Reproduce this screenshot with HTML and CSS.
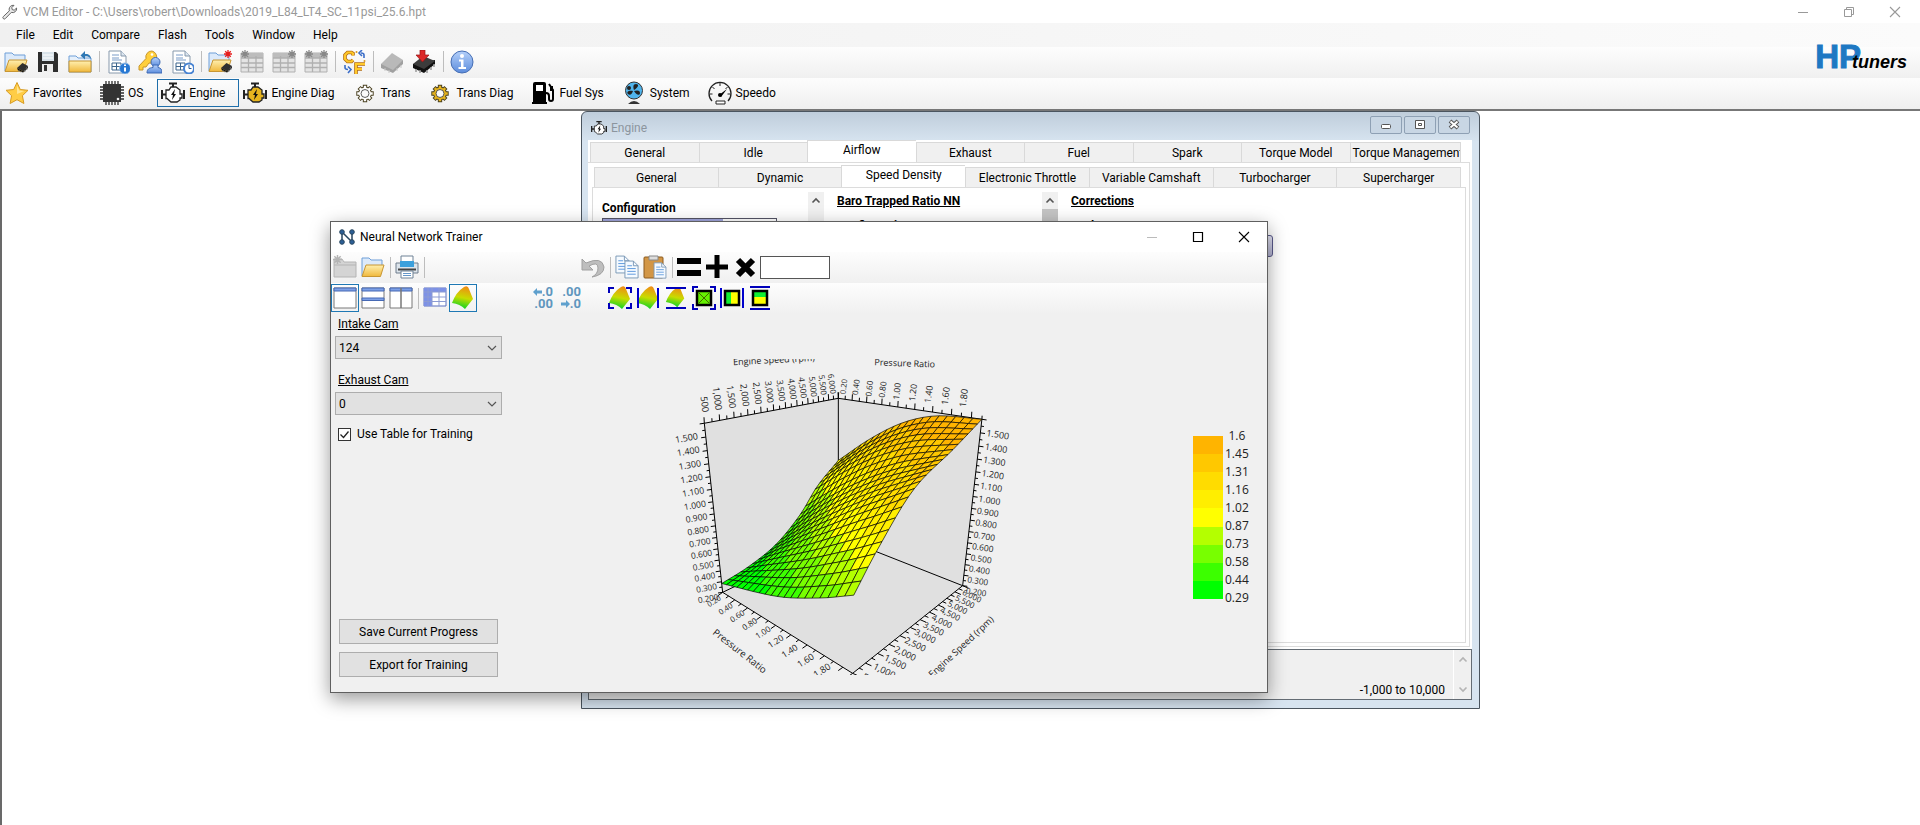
FILE: index.html
```html
<!DOCTYPE html>
<html lang="en">
<head>
    <meta charset="UTF-8">
    <meta name="viewport" content="width=device-width, initial-scale=1.0">
    <title>VCM Editor</title>
    <link rel="stylesheet" href="styles.css">
</head>
<body>

<!-- Shared icon shapes -->
<svg class="sprite" aria-hidden="true">
    <defs>
        <linearGradient id="gold" x1="0" y1="0" x2="0" y2="1">
            <stop offset="0" stop-color="#fff0b0"/><stop offset="1" stop-color="#f0b83c"/>
        </linearGradient>
        <linearGradient id="steel" x1="0" y1="0" x2="0" y2="1">
            <stop offset="0" stop-color="#b4d0fa"/><stop offset="1" stop-color="#5c8cdc"/>
        </linearGradient>
        <linearGradient id="heat" x1="0.6" y1="0" x2="0.4" y2="1">
            <stop offset="0" stop-color="#f08c14"/><stop offset="0.5" stop-color="#c8dc00"/><stop offset="1" stop-color="#00d228"/>
        </linearGradient>
        <symbol id="wrench" viewBox="0 0 16 16"><path d="M10 1.500a4 4 0 0 0-2.600 5.300L1.300 12.600a1.400 1.400 0 0 0 2 2l6-6.200A4 4 0 0 0 14.600 4l-2.400 2.200-2-.6-.4-2L12 1.400a4 4 0 0 0-2 .1z" fill="#e8e8e8" stroke="#666"/></symbol>
        <symbol id="folder" viewBox="0 0 24 24"><path d="M1 21V3h7l2 2h11v8" fill="#dceafb" stroke="#6f9fd8"/><path d="M1 21.500L5 10h18l-3.500 11.500z" fill="url(#gold)" stroke="#c89632"/></symbol>
        <symbol id="minichip" viewBox="0 0 24 24"><path d="M1 14L12 4l11 6-9 11z" fill="#303030"/><path d="M1 14l2 5 10 4 1-2zM14 21l9-11v4l-9 9z" fill="#111"/><path d="M5 18v4M9 20v3M17 18v4M21 13v5" stroke="#999" stroke-width="1.500"/></symbol>
        <symbol id="open-chip" viewBox="0 0 24 24"><use href="#folder"/><use href="#minichip" x="12" y="11" width="13" height="12"/></symbol>
        <symbol id="save" viewBox="0 0 24 24"><path d="M2 2h18l2 2v18H2z" fill="#2f2f2f"/><path d="M6 2h12v9H6z" fill="#d9e3ea"/><path d="M6 14h11v8H6z" fill="#eee"/><path d="M8 15h3v6H8z" fill="#333"/><path d="M7 5h10M7 8h10" stroke="#fff"/></symbol>
        <symbol id="folder-back" viewBox="0 0 24 24"><path d="M1 22V6h7l2 2h13v14z" fill="#e6f0fb" stroke="#6f9fd8"/><path d="M1 11h22v11H1z" fill="url(#gold)" stroke="#c89632"/><path d="M23 9c0-4-3-5.500-6-5V1l-4.500 4.500 4.500 4V6.500c3-.5 4 .5 6 2.500z" fill="#2f78b4"/></symbol>
        <symbol id="sheet" viewBox="0 0 24 24"><path d="M3 1h12l5 5v17H3z" fill="#fff" stroke="#8799ac"/><path d="M15 1v5h5" fill="#dce6f0" stroke="#8799ac"/><path d="M6 5h7M6 8h7M6 10h10" stroke="#7a9cc8"/><path d="M6 13h9v7H6zM6 16.500h9M10.500 13v7" fill="#fff" stroke="#3c648c"/></symbol>
        <symbol id="sheet-info" viewBox="0 0 24 24"><use href="#sheet"/><circle cx="19" cy="18.500" r="5.500" fill="#2878d2" stroke="#94bce8"/><path d="M19 17.500v4M19 14.500v1.500" stroke="#fff" stroke-width="2"/></symbol>
        <symbol id="sheet-clock" viewBox="0 0 24 24"><use href="#sheet"/><circle cx="19" cy="18.500" r="5" fill="#fff" stroke="#4682d2" stroke-width="2"/><path d="M19 15v3.500h2.500" fill="none" stroke="#285a96"/></symbol>
        <symbol id="key-user" viewBox="0 0 24 24"><path d="M14 1a6 6 0 0 0-6 7.500L1 16v4h4v-3h3l3-4A6 6 0 1 0 14 1z" fill="#ffcf3c" stroke="#c8962c"/><circle cx="14" cy="4.500" r="1.300" fill="#fff"/><circle cx="17.500" cy="12" r="4.500" fill="url(#steel)" stroke="#3c69b4"/><path d="M9 23c0-4 2-5 6-5.500V15h5v2.500c3 .5 4 2 4 5.500z" fill="url(#steel)" stroke="#3c69b4"/></symbol>
        <symbol id="spark" viewBox="0 0 8 8"><path d="M4 0v8M0 4h8M1.200 1.200l5.600 5.600M6.800 1.200L1.200 6.800" stroke="currentColor" stroke-width="1.300"/></symbol>
        <symbol id="folder-new" viewBox="0 0 24 24"><use href="#open-chip"/><g color="#e61e1e"><use href="#spark" x="16" y="0" width="8" height="8"/></g></symbol>
        <symbol id="gray-table" viewBox="0 0 24 24"><path d="M1 3h22v19H1z" fill="#e4e4e4" stroke="#b0b0b0"/><path d="M1 3h22v5H1z" fill="#bdbdbd"/><path d="M1 8h22M1 13h22M1 17.500h22M8.500 6v16M16 6v16" stroke="#b0b0b0" stroke-width="1.300"/></symbol>
        <symbol id="table-left" viewBox="0 0 24 24"><use href="#gray-table"/><g color="#888"><use href="#spark" x="1" y="0" width="8" height="8"/></g></symbol>
        <symbol id="table-right" viewBox="0 0 24 24"><use href="#gray-table"/><g color="#888"><use href="#spark" x="16" y="0" width="8" height="8"/></g></symbol>
        <symbol id="table-both" viewBox="0 0 24 24"><use href="#table-left"/><g color="#888"><use href="#spark" x="16" y="0" width="8" height="8"/></g></symbol>
        <symbol id="units" viewBox="0 0 24 24"><path d="M11 5.500V3.500L9.500 2.500h-4L3 5v4l2.500 2.500h4L11 10" fill="none" stroke="#b46e14" stroke-width="3.600"/><path d="M11 5.500V3.500L9.500 2.500h-4L3 5v4l2.500 2.500h4L11 10" fill="none" stroke="#ffc828" stroke-width="2"/><path d="M14 24V14h9M14 19h6" fill="none" stroke="#b46e14" stroke-width="3.600"/><path d="M14 24V14h9M14 19h6" fill="none" stroke="#ffc828" stroke-width="2"/><circle cx="14.500" cy="2" r="1" fill="#d79b23"/><circle cx="22.500" cy="11" r="1" fill="#d79b23"/><path d="M22 8V5q0-2-3-2M20 0l-3 3 3 3M3 15v2.500q0 2 3 2M6 16.500l3 3-3 3.500" fill="none" stroke="#3c6ec8" stroke-width="1.600"/></symbol>
        <symbol id="gray-chip" viewBox="0 0 24 24"><path d="M1 14v4l12 5 10-9v-4z" fill="#a0a0a0"/><path d="M1 14L12 3l11 7-10 10z" fill="#b9b9b9"/><path d="M5 18v3M9 20v3M17 18v3M21 15v3" stroke="#c8c8c8"/></symbol>
        <symbol id="red-chip" viewBox="0 0 24 24"><path d="M1 14v4l11 5 11-9v-4z" fill="#111"/><path d="M1 14L11 6l12 5-11 8z" fill="#3c3c3c"/><path d="M4 19v3M8 20v3M15 20v3M19 17v3M22 14v3" stroke="#999" stroke-width="1.500"/><path d="M8 0h5v5h4l-6.500 7L4 5h4z" fill="#dc2828" stroke="#961414" stroke-width=".7"/></symbol>
        <symbol id="info" viewBox="0 0 24 24"><circle cx="12" cy="12" r="11" fill="url(#steel)" stroke="#466eb4"/><circle cx="12" cy="6" r="2" fill="#fff"/><path d="M9 9.500h4.500V17H16v2H8.500v-2H11v-5.500H9z" fill="#fff"/></symbol>
        <symbol id="star" viewBox="0 0 24 24"><path d="M12 1.500l3.300 7 7.700.8-5.600 5.400 1.500 7.800L12 18.700l-6.900 3.800 1.500-7.800L1 9.300l7.700-.8z" fill="#ffcd46" stroke="#d79b23"/><path d="M12 4.500l2.300 5 5 .6L12 13z" fill="#ffe696"/></symbol>
        <symbol id="cpu" viewBox="0 0 24 24"><path d="M6 0v24M9 0v24M12 0v24M15 0v24M18 0v24M0 6h24M0 9h24M0 12h24M0 15h24M0 18h24" stroke="#2d2d2d" stroke-width="1.300"/><path d="M3 3h18v18H3z" fill="#333"/><circle cx="18" cy="18" r="1.300" fill="#eee"/></symbol>
        <symbol id="engine" viewBox="0 0 24 24"><path d="M8 2.500h8M12 2v4M1 9v9M1 13.500h4M23 9v9" stroke="#222" stroke-width="2" fill="none"/><path d="M5 9h3l2-3h5l4 3v4h2v4h-2v2l-3 2H10l-4-3.500H5z" fill="currentColor" stroke="#222" stroke-width="1.300"/><path d="M14 8l-4 6h2l-1 5 4-6h-2z" fill="#111"/></symbol>
        <symbol id="gear" viewBox="0 0 24 24"><g stroke="#4a4020" stroke-width="5.500"><path d="M12 1v22M1 12h22M4.500 4.500l15 15M19.500 4.500l-15 15"/></g><circle cx="12" cy="12" r="8.700" fill="#4a4020"/><g stroke="currentColor" stroke-width="3"><path d="M12 2.200v19.600M2.200 12h19.600M5.300 5.300l13.400 13.400M18.700 5.300L5.300 18.700"/></g><circle cx="12" cy="12" r="7.500" fill="currentColor"/><circle cx="12" cy="12" r="5" fill="#fbfbfb" stroke="#333"/></symbol>
        <symbol id="pump" viewBox="0 0 24 24"><path d="M2 21V3q0-2 2-2h9q2 0 2 2v18h1v2H1v-2z"/><path d="M5 4h7v6H5z" fill="#fff"/><path d="M15 12q3 0 3 3v3q0 2 2 2t2-2V9l-4-6" fill="none" stroke="#000" stroke-width="2"/><path d="M19 5h3v5h-3z"/></symbol>
        <symbol id="fan" viewBox="0 0 24 24"><circle cx="12" cy="9.500" r="8.500" fill="#50b4ec" stroke="#333"/><path d="M12 9c-1-3-1-6 2-6s3 3-2 6zM12 10c3-1 6-1 6 2s-4 2-6-2zM11 10c-1 3-3 5-5 3s1-4 5-3z" fill="#222"/><circle cx="7" cy="7" r="2" fill="#222"/><path d="M6 23q6-6 12 0z" fill="#333"/></symbol>
        <symbol id="speedo" viewBox="0 0 24 24"><path d="M4 20A11 11 0 1 1 20 20" fill="none" stroke="#222" stroke-width="1.300"/><path d="M12 2v3M4.500 6l2 2M19.500 6l-2 2M1.500 13h3M22.500 13h-3" stroke="#222"/><path d="M11 14l8-6-6 8z"/><circle cx="12" cy="14" r="2"/><path d="M8 20h9v3H8z" fill="#fff" stroke="#222"/></symbol>
        <symbol id="network" viewBox="0 0 16 16"><path d="M3 13V3l10 10V3" fill="none" stroke="#28465f" stroke-width="1.500"/><g fill="#2d5f96" stroke="#28465f"><circle cx="3" cy="3" r="2.300"/><circle cx="13" cy="3" r="2.300"/><circle cx="3" cy="13" r="2.300"/><circle cx="13" cy="13" r="2.300"/></g></symbol>
        <symbol id="folder-off" viewBox="0 0 24 24"><path d="M1 22V4h8l2 3h12v15z" fill="#d4d4d4" stroke="#b4b4b4"/><path d="M1 10h22" stroke="#b4b4b4"/><g color="#b4b4b4"><use href="#spark" x="0" y="0" width="9" height="9"/></g></symbol>
        <symbol id="printer" viewBox="0 0 24 24"><path d="M6 1h12v8H6z" fill="#fff" stroke="#6e8296"/><path d="M1 8h22v10H1z" fill="#dce4eb" stroke="#6e7d8c"/><path d="M5 6h14v6H5z" fill="#3ca0dc"/><path d="M3 14.500h18" stroke="#444" stroke-width="2"/><path d="M6 16h12v7H6z" fill="#fff" stroke="#6e8296"/><path d="M8 18.500h8M8 20.500h8" stroke="#6496c8"/></symbol>
        <symbol id="undo" viewBox="0 0 24 24"><path d="M1 4v11h11l-4-4q9-5 9 2 0 6-6 9 12-2 12-10Q21 1 5 8z" fill="#bebebe" stroke="#a0a0a0"/></symbol>
        <symbol id="page" viewBox="0 0 16 20"><path d="M1 1h9l5 5v13H1z" fill="#f5faff" stroke="#7896b4"/><path d="M10 1v5h5" fill="none" stroke="#7896b4"/><path d="M3.500 6h5M3.500 9h9M3.500 12h9M3.500 15h9" stroke="#5a96dc"/></symbol>
        <symbol id="copy" viewBox="0 0 24 24"><use href="#page" x="0" y="0" width="15" height="19"/><use href="#page" x="9" y="5" width="15" height="19"/></symbol>
        <symbol id="paste" viewBox="0 0 24 24"><rect x="1" y="2" width="19" height="21" rx="1" fill="#d29646" stroke="#8c5a1e"/><path d="M6 1h9v4H6z" fill="#ddd" stroke="#888"/><use href="#page" x="10" y="7" width="14" height="17"/></symbol>
        <symbol id="equals" viewBox="0 0 24 24"><path d="M0 3h24v6H0zM0 15h24v6H0z"/></symbol>
        <symbol id="plus" viewBox="0 0 24 24"><path d="M9.500 0h5v9.500H23v5h-8.500V23h-5v-8.500H1v-5h8.500z"/></symbol>
        <symbol id="times" viewBox="0 0 24 24"><path d="M5 5l15 15M20 5L5 20" stroke="#000" stroke-width="6"/></symbol>
        <symbol id="pane" viewBox="0 0 24 24"><path d="M1 2h22v20H1z" fill="#fff" stroke="#787878"/><path d="M1 2h22v3H1z" fill="#7da0e6" stroke="#4669b4"/></symbol>
        <symbol id="pane-rows" viewBox="0 0 24 24"><use href="#pane"/><path d="M1 12h22v2.500H1z" fill="#7da0e6" stroke="#4669b4"/></symbol>
        <symbol id="pane-cols" viewBox="0 0 24 24"><use href="#pane"/><path d="M12 2v20" stroke="#777" stroke-width="1.500"/></symbol>
        <symbol id="grid" viewBox="0 0 24 24"><path d="M1 2h22v18H1z" fill="#fff" stroke="#5a6ebe"/><path d="M1 2h22v4H1zM1 2h8v18H1z" fill="#7d91e6"/><path d="M1 6h22M1 11h22M1 15.500h22M5 2v18M9 2v18M16 2v18" stroke="#8c9bd2"/></symbol>
        <symbol id="surface" viewBox="0 0 24 24"><path d="M1 17Q5 6 13 1q4-2 5 2l4 10-8 10q-5-5-13-6z" fill="url(#heat)"/></symbol>
        <symbol id="view-all" viewBox="0 0 24 24"><use href="#surface"/><path d="M6 2H1v5M18 2h5v5M6 22H1v-5M18 22h5v-5" fill="none" stroke="#00b" stroke-width="2"/></symbol>
        <symbol id="view-x" viewBox="0 0 24 24"><use href="#surface"/><path d="M2 2v20M22 2v20" stroke="#00c" stroke-width="2"/></symbol>
        <symbol id="view-y" viewBox="0 0 24 24"><use href="#surface" x="1" y="1" width="21" height="21"/><path d="M2 2h20M2 22h20" stroke="#00b" stroke-width="2"/></symbol>
        <symbol id="fit-all" viewBox="0 0 24 24"><path d="M5 5h14v14H5z" fill="#64f000" stroke="#000" stroke-width="2.500"/><path d="M7 7l10 10M17 7L7 17" stroke="#460"/><path d="M6 1H1v5M18 1h5v5M6 23H1v-5M18 23h5v-5" fill="none" stroke="#00b" stroke-width="2"/></symbol>
        <symbol id="fit-x" viewBox="0 0 24 24"><path d="M5 5h14v14H5z" fill="#ff0"/><path d="M5 5h6v14H5z" fill="#1e3"/><path d="M5 5h14v14H5z" fill="none" stroke="#000" stroke-width="2.500"/><path d="M1 2v20M23 2v20" stroke="#00c" stroke-width="2"/></symbol>
        <symbol id="fit-y" viewBox="0 0 24 24"><path d="M5 5h14v14H5z" fill="#ff0"/><path d="M5 5h14v6H5z" fill="#1e3"/><path d="M5 5h14v14H5z" fill="none" stroke="#000" stroke-width="2.500"/><path d="M2 1h20M2 23h20" stroke="#00b" stroke-width="2"/></symbol>
        <symbol id="win-min" viewBox="0 0 12 12"><path d="M1 6.500h10" stroke="currentColor"/></symbol>
        <symbol id="win-max" viewBox="0 0 12 12"><path d="M1.500 1.500h9v9h-9z" fill="none" stroke="currentColor" stroke-width="1.200"/></symbol>
        <symbol id="win-restore" viewBox="0 0 12 12"><path d="M1.500 3.500h7v7h-7zM3.500 3.500v-2h7v7h-2" fill="none" stroke="currentColor"/></symbol>
        <symbol id="win-close" viewBox="0 0 12 12"><path d="M1 1l10 10M11 1L1 11" stroke="currentColor" stroke-width="1.100"/></symbol>
        <symbol id="chev-up" viewBox="0 0 10 10"><path d="M1.500 6.500L5 3l3.500 3.500" fill="none" stroke="currentColor" stroke-width="1.600"/></symbol>
        <symbol id="chev-down" viewBox="0 0 10 10"><path d="M1.500 3.500L5 7l3.500-3.500" fill="none" stroke="currentColor" stroke-width="1.600"/></symbol>
    </defs>
</svg>

<div class="app">
    <header class="titlebar">
        <svg class="icon-small"><use href="#wrench"/></svg>
        <h1>VCM Editor - C:\Users\robert\Downloads\2019_L84_LT4_SC_11psi_25.6.hpt</h1>
        <div class="window-buttons">
            <button aria-label="Minimize"><svg><use href="#win-min"/></svg></button>
            <button aria-label="Restore"><svg><use href="#win-restore"/></svg></button>
            <button aria-label="Close"><svg><use href="#win-close"/></svg></button>
        </div>
    </header>

    <div class="bars">
        <nav class="menubar">
            <button>File</button>
            <button>Edit</button>
            <button>Compare</button>
            <button>Flash</button>
            <button>Tools</button>
            <button>Window</button>
            <button>Help</button>
        </nav>
        <div class="toolbar main-tools">
            <button aria-label="Open"><svg><use href="#open-chip"/></svg></button>
            <button aria-label="Save"><svg><use href="#save"/></svg></button>
            <button aria-label="Close file"><svg><use href="#folder-back"/></svg></button>
            <span class="sep"></span>
            <button aria-label="File info"><svg><use href="#sheet-info"/></svg></button>
            <button aria-label="License"><svg><use href="#key-user"/></svg></button>
            <button aria-label="History"><svg><use href="#sheet-clock"/></svg></button>
            <span class="sep"></span>
            <button aria-label="Open compare"><svg><use href="#folder-new"/></svg></button>
            <button aria-label="Table left"><svg><use href="#table-left"/></svg></button>
            <button aria-label="Table right"><svg><use href="#table-right"/></svg></button>
            <button aria-label="Table both"><svg><use href="#table-both"/></svg></button>
            <span class="sep"></span>
            <button aria-label="Units"><svg><use href="#units"/></svg></button>
            <span class="sep"></span>
            <button aria-label="Read vehicle"><svg><use href="#gray-chip"/></svg></button>
            <button aria-label="Write vehicle"><svg><use href="#red-chip"/></svg></button>
            <span class="sep"></span>
            <button aria-label="About"><svg><use href="#info"/></svg></button>
        </div>
        <div class="logo"><span class="logo-hp">HP</span><span class="logo-tuners">tuners</span></div>
    </div>

    <nav class="sections">
        <button><svg><use href="#star"/></svg>Favorites</button>
        <button><svg><use href="#cpu"/></svg>OS</button>
        <button class="selected"><svg><use href="#engine"/></svg>Engine</button>
        <button><svg class="amber"><use href="#engine"/></svg>Engine Diag</button>
        <button><svg class="cog"><use href="#gear"/></svg>Trans</button>
        <button><svg class="cog amber"><use href="#gear"/></svg>Trans Diag</button>
        <button><svg><use href="#pump"/></svg>Fuel Sys</button>
        <button><svg><use href="#fan"/></svg>System</button>
        <button><svg><use href="#speedo"/></svg>Speedo</button>
    </nav>

    <main class="workspace">
        <section class="engine-window">
            <div class="engine-title">
                <svg class="icon-small"><use href="#engine"/></svg>
                <h2>Engine</h2>
                <div class="mdi-buttons">
                    <button aria-label="Minimize"><svg viewBox="0 0 12 12"><rect x="1.500" y="5.500" width="9" height="4" rx="1" fill="#fff" stroke="#555"/></svg></button>
                    <button aria-label="Maximize"><svg viewBox="0 0 12 12"><path d="M1.500 1.500h9v8h-9zM4.500 4.500h3v2h-3z" fill="#fff" stroke="#555"/></svg></button>
                    <button aria-label="Close"><svg viewBox="0 0 12 12"><path d="M2 2l8 7M10 2L2 9" stroke="#555" stroke-width="4"/><path d="M2.500 2.500l7 6M9.500 2.500l-7 6" stroke="#fff" stroke-width="2"/></svg></button>
                </div>
            </div>
            <div class="engine-body">
                <div class="tabs">
                    <button>General</button>
                    <button>Idle</button>
                    <button class="active">Airflow</button>
                    <button>Exhaust</button>
                    <button>Fuel</button>
                    <button>Spark</button>
                    <button>Torque Model</button>
                    <button class="cut">Torque Management</button>
                </div>
                <div class="outer-page">
                    <div class="tabs sub">
                        <button>General</button>
                        <button>Dynamic</button>
                        <button class="active">Speed Density</button>
                        <button>Electronic Throttle</button>
                        <button>Variable Camshaft</button>
                        <button>Turbocharger</button>
                        <button>Supercharger</button>
                    </div>
                    <div class="inner-page">
                        <div class="param-column first">
                            <h3>Configuration</h3>
                            <div class="meter"><span></span></div>
                        </div>
                        <div class="scroll"><svg><use href="#chev-up"/></svg></div>
                        <div class="param-column second">
                            <h3 class="underlined">Baro Trapped Ratio NN</h3>
                            <h4>Configuration</h4>
                        </div>
                        <div class="scroll"><svg><use href="#chev-up"/></svg><i class="thumb"></i></div>
                        <div class="param-column third">
                            <h3 class="underlined">Corrections</h3>
                            <h4>Scalar</h4>
                            <button class="table-button" aria-label="Open table"></button>
                        </div>
                    </div>
                </div>
                <div class="status">
                    <span>-1,000 to 10,000</span>
                    <div class="status-scroll"><svg><use href="#chev-up"/></svg><svg><use href="#chev-down"/></svg></div>
                </div>
            </div>
        </section>
    </main>

    <section class="trainer">
        <div class="trainer-title">
            <svg class="icon-small"><use href="#network"/></svg>
            <h2>Neural Network Trainer</h2>
            <div class="window-buttons">
                <button class="off" aria-label="Minimize"><svg><use href="#win-min"/></svg></button>
                <button aria-label="Maximize"><svg><use href="#win-max"/></svg></button>
                <button aria-label="Close"><svg><use href="#win-close"/></svg></button>
            </div>
        </div>
        <div class="toolbar small-tools">
            <div class="tool-group file-group">
                <button aria-label="New"><svg><use href="#folder-off"/></svg></button>
                <button aria-label="Open"><svg><use href="#folder"/></svg></button>
                <span class="sep"></span>
                <button aria-label="Print"><svg><use href="#printer"/></svg></button>
                <span class="sep"></span>
            </div>
            <button aria-label="Undo"><svg><use href="#undo"/></svg></button>
            <span class="sep"></span>
            <button aria-label="Copy"><svg><use href="#copy"/></svg></button>
            <button aria-label="Paste"><svg><use href="#paste"/></svg></button>
            <span class="sep"></span>
            <button aria-label="Set value"><svg><use href="#equals"/></svg></button>
            <button aria-label="Add"><svg><use href="#plus"/></svg></button>
            <button aria-label="Multiply"><svg><use href="#times"/></svg></button>
            <input type="text" class="value-input" aria-label="Value">
        </div>
        <div class="toolbar small-tools">
            <div class="tool-group view-group">
                <button class="selected" aria-label="Single pane"><svg><use href="#pane"/></svg></button>
                <button aria-label="Split rows"><svg><use href="#pane-rows"/></svg></button>
                <button aria-label="Split columns"><svg><use href="#pane-cols"/></svg></button>
                <span class="sep"></span>
                <button aria-label="Table view"><svg><use href="#grid"/></svg></button>
                <button class="selected" aria-label="Surface view"><svg><use href="#surface"/></svg></button>
            </div>
            <div class="tool-group decimal-group">
                <button class="decimals"><span><svg class="arrow" viewBox="0 0 9 8"><path d="M0 4l4-4v2.500h5v3H4V8z"/></svg>.0</span><span>.00</span></button>
                <button class="decimals"><span>.00</span><span><svg class="arrow" viewBox="0 0 9 8"><path d="M9 4L5 0v2.500H0v3h5V8z"/></svg>.0</span></button>
            </div>
            <button aria-label="Surface all"><svg><use href="#view-all"/></svg></button>
            <button aria-label="Surface columns"><svg><use href="#view-x"/></svg></button>
            <button aria-label="Surface rows"><svg><use href="#view-y"/></svg></button>
            <button aria-label="Interpolate all"><svg><use href="#fit-all"/></svg></button>
            <button aria-label="Interpolate columns"><svg><use href="#fit-x"/></svg></button>
            <button aria-label="Interpolate rows"><svg><use href="#fit-y"/></svg></button>
        </div>
        <div class="trainer-body">
            <form class="side">
                <label for="intake">Intake Cam</label>
                <select id="intake"><option>124</option></select>
                <label for="exhaust">Exhaust Cam</label>
                <select id="exhaust"><option>0</option></select>
                <div class="check-row">
                    <input type="checkbox" id="use-table" checked>
                    <label for="use-table">Use Table for Training</label>
                </div>
                <div class="actions">
                    <button type="button">Save Current Progress</button>
                    <button type="button">Export for Training</button>
                </div>
            </form>
            <div class="plot"><svg id="chart" viewBox="0 27 1020 948"></svg></div>
            <div class="legend">
                <div class="legend-bar" id="legend-bar"></div>
                <div class="legend-labels">
                    <span>1.6</span><span>1.45</span><span>1.31</span><span>1.16</span><span>1.02</span>
                    <span>0.87</span><span>0.73</span><span>0.58</span><span>0.44</span><span>0.29</span>
                </div>
            </div>
        </div>
    </section>
</div>

<script src="chart.js"></script>
</body>
</html>
```

FILE: styles.css
```css
* {
    box-sizing: border-box;
}
body {
    margin: 0;
    background: #fff;
    color: #000;
    font-family: Roboto, "Open Sans", sans-serif;
    font-size: 12px;
}
h1, h2, h3, h4 {
    margin: 0;
    font-size: 12px;
    font-weight: normal;
}
button {
    padding: 0;
    border: 0;
    background: none;
    color: inherit;
    font: inherit;
    white-space: nowrap;
}
svg {
    display: block;
    flex: none;
}
.sprite {
    position: absolute;
    width: 0;
    height: 0;
}
.app {
    position: relative;
    display: flex;
    flex-direction: column;
    min-height: 100vh;
}
.icon-small {
    width: 16px;
    height: 16px;
    color: #fff;
}

/* Main window title */
.titlebar {
    display: flex;
    align-items: center;
    height: 23px;
    padding-left: 2px;
    gap: 5px;
    color: #999;
}
.window-buttons {
    display: flex;
    margin-left: auto;
}
.window-buttons button {
    display: flex;
    align-items: center;
    justify-content: center;
    width: 46px;
    height: 22px;
}
.window-buttons svg {
    width: 12px;
    height: 12px;
}
.titlebar .window-buttons {
    padding-right: 2px;
}

/* Menu and tool bars */
.bars {
    position: relative;
}
.menubar {
    display: flex;
    align-items: center;
    height: 24px;
    padding-left: 7px;
    background: linear-gradient(to right, #f0f0f0, #fbfbfb);
}
.menubar button {
    padding: 0 9px;
}
.toolbar {
    display: flex;
    align-items: center;
    background: linear-gradient(#fdfdfd, #f0f0f0);
}
.toolbar button {
    display: flex;
    align-items: center;
    justify-content: center;
}
.toolbar svg {
    width: 24px;
    height: 24px;
}
.main-tools {
    height: 31px;
    padding-bottom: 2px;
}
.main-tools button {
    width: 32px;
    height: 28px;
}
.sep {
    width: 3px;
    height: 21px;
    margin-left: 3px;
    border-left: 1px solid #bdbdbd;
}
.logo {
    position: absolute;
    right: 13px;
    bottom: 0;
    display: flex;
    align-items: baseline;
    font-family: "Liberation Sans", Arial, sans-serif;
    font-weight: bold;
    line-height: 32px;
}
.logo-hp {
    color: #1e78c3;
    font-size: 33px;
    -webkit-text-stroke: 1px #1e78c3;
}
.logo-tuners {
    margin-left: -9px;
    font-size: 18px;
    font-style: italic;
}
.sections {
    display: flex;
    height: 33px;
    padding-left: 1px;
    background: linear-gradient(#fdfdfd, #efefef);
    border-bottom: 2px solid #777;
}
.sections button {
    display: flex;
    align-items: center;
    gap: 4px;
    height: 28px;
    margin-top: 1px;
    padding: 0 13px 0 3px;
    border: 1px solid transparent;
}
.sections button.selected {
    border-color: #1e6eaa;
}
.sections svg {
    width: 24px;
    height: 24px;
    color: #fff;
}
.sections .cog {
    height: 19px;
}
.sections .amber {
    color: #e6b41e;
}

/* Editor canvas */
.workspace {
    position: relative;
    flex: 1;
    border-left: 2px solid #696969;
    background: #fff;
}
.engine-window {
    position: absolute;
    left: 579px;
    top: 0;
    width: 899px;
    height: 598px;
    display: flex;
    flex-direction: column;
    padding: 0 7px 8px 6px;
    border: 1px solid #4b555f;
    border-radius: 6px 6px 0 0;
    background: linear-gradient(#bfcddb, #d7e4f0 30px);
}
.engine-title {
    display: flex;
    align-items: center;
    gap: 4px;
    height: 28px;
    padding: 4px 2px 0 3px;
    color: #8c959e;
}
.mdi-buttons {
    display: flex;
    gap: 2px;
    margin: -6px 0 0 auto;
}
.mdi-buttons button {
    display: flex;
    align-items: center;
    justify-content: center;
    width: 32px;
    height: 18px;
    border: 1px solid #8ea0b4;
    border-radius: 2px;
    background: #c8d6e4;
}
.mdi-buttons svg {
    width: 12px;
    height: 12px;
}
.engine-body {
    flex: 1;
    display: flex;
    flex-direction: column;
    background: #fff;
}
.tabs {
    display: flex;
    align-items: flex-end;
    height: 22px;
    padding: 0 11px 0 2px;
}
.tabs button {
    flex: 1 1 0;
    height: 20px;
    min-width: 0;
    overflow: hidden;
    border: 1px solid #d9d9d9;
    border-width: 1px 0 0 1px;
    background: #f0f0f0;
}
.tabs button:last-child {
    border-right-width: 1px;
}
.tabs button.active {
    height: 22px;
    padding-bottom: 3px;
    background: #fff;
}
.tabs button.cut {
    text-align: left;
    padding-left: 2px;
}
.outer-page {
    flex: 1;
    display: flex;
    flex-direction: column;
    margin-right: 2px;
    padding: 2px 3px 3px 4px;
    border: 1px solid #dcdcdc;
    border-left: 0;
}
.tabs.sub {
    padding: 0 5px 0 2px;
}
.inner-page {
    flex: 1;
    display: flex;
    padding: 4px 0 0 9px;
    border: 1px solid #dcdcdc;
}
.param-column h3 {
    font-weight: bold;
    line-height: 18px;
}
.param-column h4 {
    font-weight: bold;
    padding-top: 9px;
}
.first {
    width: 206px;
}
.first h3 {
    padding-top: 7px;
}
.second {
    width: 218px;
    padding-left: 13px;
}
.third {
    padding-left: 13px;
}
.underlined {
    text-decoration: underline;
}
.meter {
    width: 175px;
    height: 22px;
    margin-top: 1px;
    border: 1px solid #556;
}
.meter span {
    display: block;
    width: 120px;
    height: 20px;
    background: #a0a5dc;
}
.scroll {
    width: 16px;
    height: 300px;
    padding-top: 4px;
    background: #f0f0f0;
    color: #555;
}
.scroll svg {
    width: 10px;
    height: 10px;
    margin: 0 3px;
}
.thumb {
    display: block;
    height: 80px;
    margin-top: 3px;
    background: #c4c4c4;
}
.table-button {
    width: 202px;
    height: 22px;
    margin-top: 2px;
    border: 1px solid #5a5a8c;
    border-radius: 3px;
    background: linear-gradient(#e6e6f5, #b4b4d2);
}
.status {
    display: flex;
    align-items: flex-end;
    justify-content: flex-end;
    height: 51px;
    margin-top: 2px;
    border: 1px solid #646c74;
    background: #f0f0f0;
}
.status > span {
    padding: 0 8px 2px 0;
}
.status-scroll {
    display: flex;
    flex-direction: column;
    justify-content: space-between;
    width: 18px;
    height: 49px;
    padding: 5px 4px;
    border-left: 1px solid #fff;
    color: #b4b4b4;
}
.status-scroll svg {
    width: 10px;
    height: 10px;
}

/* Neural network trainer dialog */
.trainer {
    position: absolute;
    left: 330px;
    top: 221px;
    width: 938px;
    height: 472px;
    display: flex;
    flex-direction: column;
    border: 1px solid #5f5f5f;
    background: #f0f0f0;
    box-shadow: 0 6px 18px rgba(0, 0, 0, 0.4);
}
.trainer-title {
    display: flex;
    align-items: center;
    height: 30px;
    padding-left: 8px;
    gap: 5px;
    background: #fff;
}
.off {
    color: #bbb;
}
.small-tools {
    height: 31px;
    padding-bottom: 1px;
}
.small-tools button {
    width: 28px;
    height: 28px;
    border: 1px solid transparent;
}
.small-tools button.selected {
    border-color: #1e78b4;
}
.tool-group {
    display: flex;
    align-items: center;
}
.file-group {
    width: 248px;
}
.view-group {
    width: 197px;
}
.decimal-group {
    width: 78px;
}
.small-tools .decimals {
    flex-direction: column;
    color: #5f96be;
    font-size: 13px;
    font-weight: bold;
    line-height: 12px;
}
.decimals span {
    display: flex;
    align-items: center;
    justify-content: flex-end;
    width: 22px;
}
.toolbar .arrow {
    width: 9px;
    height: 8px;
    fill: #5fa0cd;
}
.value-input {
    width: 70px;
    height: 23px;
    margin-left: 1px;
    border: 1px solid #555;
    background: #fff;
    font: inherit;
}
.trainer-body {
    flex: 1;
    display: flex;
    align-items: flex-start;
}
.side {
    align-self: stretch;
    display: flex;
    flex-direction: column;
    width: 171px;
    padding: 1px 0 15px 4px;
}
.side > label {
    padding-left: 3px;
    line-height: 18px;
    text-decoration: underline;
}
.side select {
    appearance: none;
    height: 23px;
    margin: 3px 0 12px;
    padding: 0 3px;
    border: 1px solid #adadad;
    border-radius: 0;
    background: #e1e1e1 url("data:image/svg+xml,%3Csvg xmlns='http://www.w3.org/2000/svg' width='10' height='6'%3E%3Cpath d='M1 1l4 4 4-4' fill='none' stroke='%23555' stroke-width='1.200'/%3E%3C/svg%3E") no-repeat right 4px center;
    color: #000;
    font: inherit;
}
.check-row {
    display: flex;
    align-items: center;
    gap: 6px;
    padding-left: 3px;
}
.check-row input {
    appearance: none;
    width: 13px;
    height: 13px;
    margin: 0;
    border: 1px solid #333;
    background: #fff url("data:image/svg+xml,%3Csvg xmlns='http://www.w3.org/2000/svg' width='11' height='11'%3E%3Cpath d='M1.500 5.500l3 3L9.500 2.500' fill='none' stroke='%23222' stroke-width='1.300'/%3E%3C/svg%3E") center no-repeat;
}
.actions {
    display: flex;
    flex-direction: column;
    gap: 8px;
    margin-top: auto;
    padding: 0 4px;
}
.actions button {
    height: 25px;
    border: 1px solid #adadad;
    background: #e1e1e1;
}
.plot {
    flex: 1;
    padding: 45px 0 0 168px;
}
.plot svg {
    width: 340px;
    height: 316px;
}
.plot text {
    fill: #222;
    font-family: "Open Sans", sans-serif;
    text-anchor: middle;
    dominant-baseline: middle;
}
.box line {
    stroke: #000;
    stroke-width: 3;
}
.wall {
    fill: #e0e0e0;
}
.mesh polygon {
    stroke: #000;
    stroke-width: 2;
    stroke-linejoin: round;
}
.legend {
    display: flex;
    gap: 2px;
    width: 74px;
    padding-top: 113px;
    font-family: "Open Sans", sans-serif;
}
.legend-bar {
    width: 30px;
    height: 163px;
    margin-top: 9px;
}
.legend-bar div {
    height: calc(100% / 9);
}
.legend-labels {
    text-align: center;
}
.legend-labels span {
    display: block;
    line-height: 18px;
    color: #222;
}
```

FILE: chart.js
```js
// Surface plot of pressure ratio against engine speed
const NS = 'http://www.w3.org/2000/svg';
const chart = document.getElementById('chart');
const bands = ['#00ff00', '#3cff00', '#78ff00', '#b4ff00', '#ffff00', '#ffee00', '#ffdc00', '#ffc800', '#ffb400'];

function add(parent, name, attrs, text) {
    const el = document.createElementNS(NS, name);
    for (const key in attrs) el.setAttribute(key, attrs[key]);
    if (text) el.textContent = text;
    parent.appendChild(el);
    return el;
}

// a: back to left, b: back to right, c: height, all 0..1
function project(a, b, c) {
    const w = 1 - 0.1978 * a - 0.1822 * b - 0.1097 * c;
    const x = 505 - 378.3 * a + 213 * b - 55.4 * c;
    const y = 560 + 23.2 * a + 18.2 * b - 431 * c;
    return [x / w, y / w];
}

// Smooth curve through a list of [t, value]
function curve(points, t) {
    let i = 0;
    while (i < points.length - 2 && t > points[i + 1][0]) i++;
    const slope = k => {
        const p = points[Math.max(k - 1, 0)];
        const q = points[Math.min(k + 1, points.length - 1)];
        return (q[1] - p[1]) / (q[0] - p[0]);
    };
    const [t0, v0] = points[i];
    const [t1, v1] = points[i + 1];
    const h = t1 - t0;
    const s = (t - t0) / h;
    const s2 = s * s;
    const s3 = s2 * s;
    return (2 * s3 - 3 * s2 + 1) * v0 + (s3 - 2 * s2 + s) * h * slope(i)
        + (3 * s2 - 2 * s3) * v1 + (s3 - s2) * h * slope(i + 1);
}

const lowRatio = [[0, 0.58], [0.21, 0.445], [0.36, 0.3], [0.576, 0.16], [0.8, 0.09], [1, 0.06]];
const highRatio = [[0, 1], [0.27, 0.896], [0.6, 0.775], [0.853, 0.566], [1, 0.415]];
const highSpeed = [[0, 0.58], [0.27, 0.775], [0.51, 0.912], [0.73, 0.982], [1, 1]];
const lowSpeed = [[0, 0.06], [0.5, 0.19], [0.8, 0.313], [1, 0.415]];

function height(a, b) {
    const sides = (1 - b) * curve(lowRatio, a) + b * curve(highRatio, a);
    const ends = (1 - a) * curve(highSpeed, b) + a * curve(lowSpeed, b);
    const corners = (1 - a) * ((1 - b) * 0.58 + b) + a * ((1 - b) * 0.06 + b * 0.415);
    return sides + ends - corners;
}

function poly(parent, points, attrs) {
    attrs.points = points.map(p => p[0].toFixed(1) + ',' + p[1].toFixed(1)).join(' ');
    add(parent, 'polygon', attrs);
}

const box = add(chart, 'g', { class: 'box' });
poly(box, [project(0, 0, 0), project(1, 0, 0), project(1, 0, 1), project(0, 0, 1)], { class: 'wall' });
poly(box, [project(0, 0, 0), project(0, 1, 0), project(0, 1, 1), project(0, 0, 1)], { class: 'wall' });
poly(box, [project(0, 0, 0), project(1, 0, 0), project(1, 1, 0), project(0, 1, 0)], { class: 'wall' });

function line(p, q) {
    add(box, 'line', { x1: p[0], y1: p[1], x2: q[0], y2: q[1] });
}

line(project(0, 0, 0), project(0, 0, 1));
line(project(0, 0, 0), project(1, 0, 0));
line(project(0, 0, 0), project(0, 1, 0));

// Edge with ticks, longer on every second one
function axis(from, to, count, dx, dy) {
    line(project(...from), project(...to));
    for (let i = 0; i <= count; i++) {
        const p = project(...from.map((v, k) => v + (to[k] - v) * i / count));
        const size = i % 2 ? 0.6 : 1;
        line(p, [p[0] + dx * size, p[1] + dy * size]);
    }
}

axis([1, 0, 0], [1, 0, 1], 28, -14, 2);
axis([0, 1, 0], [0, 1, 1], 28, 14, 2);
axis([1, 0, 1], [0, 0, 1], 22, -1, -18);
axis([0, 0, 1], [0, 1, 1], 17, 1, -18);
axis([1, 0, 0], [1, 1, 0], 17, -14, 10);
axis([1, 1, 0], [0, 1, 0], 22, 18, 8);

const mesh = add(chart, 'g', { class: 'mesh' });
const rows = 22;
const cols = 20;
for (let i = 0; i < rows; i++) {
    for (let j = 0; j < cols; j++) {
        const corners = [[i, j], [i + 1, j], [i + 1, j + 1], [i, j + 1]];
        const points = corners.map(([r, k]) => project(r / rows, k / cols, height(r / rows, k / cols)));
        const value = 0.2 + 1.4 * height((i + 0.5) / rows, (j + 0.5) / cols);
        const band = Math.floor((value - 0.29) / 1.31 * 9);
        poly(mesh, points, { fill: bands[Math.max(0, Math.min(8, band))] });
    }
}

function label(text, x, y, angle, size) {
    add(chart, 'text', { transform: `translate(${x} ${y}) rotate(${angle})`, 'font-size': size }, text);
}

const leftY = [266, 306, 347, 388, 428, 468, 506, 544, 580, 615, 650, 683, 716, 748];
const rightY = [256, 297, 336, 376, 414, 453, 489, 524, 561, 595, 629, 662, 695, 728];
for (let i = 0; i < 14; i++) {
    const text = (1.5 - i / 10).toFixed(3);
    label(text, 50 + i * 5, leftY[i], -10, 27 - i * 0.2);
    label(text, 983 - i * 5, rightY[i], 9, 27 - i * 0.2);
}

const speeds = ['500', '1,000', '1,500', '2,000', '2,500', '3,000', '3,500', '4,000', '4,500', '5,000', '5,500', '6,000'];
const speedTop = [[102, 163], [140, 146], [182, 141], [222, 136], [260, 130], [296, 126], [331, 122], [365, 117], [396, 113], [427, 110], [456, 105], [484, 102]];
const speedBottom = [[600, 990], [642, 964], [675, 938], [705, 912], [735, 885], [765, 860], [790, 838], [815, 816], [840, 794], [862, 774], [884, 757], [905, 740]];
speeds.forEach((text, i) => {
    label(text, ...speedTop[i], 83, 28 - i * 0.4);
    label(text, ...speedBottom[i], 26, 28 - i * 0.4);
});

const ratioTop = [[523, 110], [560, 112], [600, 116], [640, 119], [683, 124], [731, 128], [778, 133], [829, 138], [883, 144]];
const ratioBottom = [[133, 755], [168, 778], [203, 800], [240, 824], [280, 849], [318, 876], [360, 905], [408, 933], [457, 963]];
for (let i = 0; i < 9; i++) {
    const text = (0.2 + i * 0.2).toFixed(2);
    label(text, ...ratioTop[i], -83, 23 + i * 0.6);
    label(text, ...ratioBottom[i], -33, 22 + i * 0.7);
}

label('Engine Speed (rpm)', 312, 32, -3, 27);
label('Pressure Ratio', 704, 42, 2, 27);
label('Pressure Ratio', 208, 905, 38, 29);
label('Engine Speed (rpm)', 875, 892, -43, 28);

// Legend colours, highest band first
const bar = document.getElementById('legend-bar');
bands.slice().reverse().forEach(color => {
    const cell = document.createElement('div');
    cell.style.background = color;
    bar.appendChild(cell);
});
```
